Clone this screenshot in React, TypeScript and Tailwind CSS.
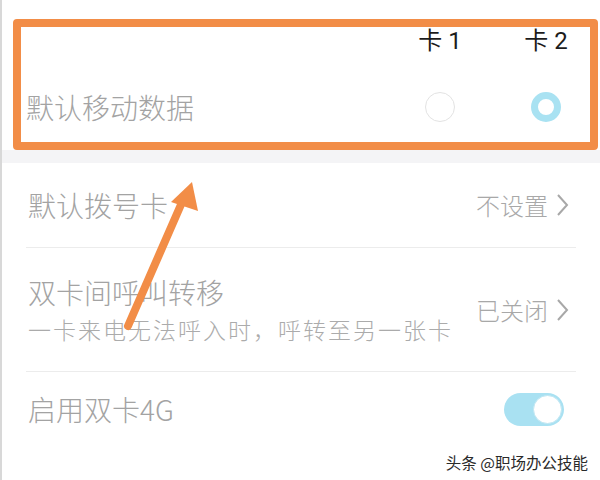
import React from "react";

const font = { fontFamily: '"Noto Sans CJK SC", "Noto Sans", sans-serif' };

function Chevron() {
  return (
    <svg width="14" height="26" viewBox="0 0 14 26" className="ml-[8px]">
      <polyline points="2,3 11,13 2,23" fill="none" stroke="#a8a8a8" strokeWidth="2" />
    </svg>
  );
}

export default function App() {
  return (
    <div
      className="relative w-[600px] h-[480px] overflow-hidden bg-white border-l-[2px] border-[#d8d8d8]"
      style={font}
    >
      {/* top section */}
      <div className="h-[150px] pt-[19px] pl-[11px] pr-[2px] bg-white">
        <div className="h-[131px] border-[8px] border-[#f28d47] rounded-[4px] flex flex-col pl-[5px] pr-[14px]">
          <div className="h-[28px] flex items-center justify-end gap-[46px] text-[24px] text-[#1c1c1c] leading-none">
            <div className="w-[60px] text-center" style={{ fontFamily: 'Roboto, "Noto Sans CJK SC", sans-serif' }}>卡 1</div>
            <div className="w-[60px] text-center" style={{ fontFamily: 'Roboto, "Noto Sans CJK SC", sans-serif' }}>卡 2</div>
          </div>
          <div className="flex-1 pt-[16px] flex items-center">
            <div className="flex-1 text-[28px] font-light text-[#a3a3a3] leading-none">默认移动数据</div>
            <div className="flex gap-[46px]">
              <div className="w-[60px] flex justify-center">
                <div className="w-[30px] h-[30px] rounded-full border-[1.5px] border-[#e3e3e3]" />
              </div>
              <div className="w-[60px] flex justify-center">
                <div className="w-[30px] h-[30px] rounded-full border-[7px] border-[#a9e2f2] bg-white" />
              </div>
            </div>
          </div>
        </div>
      </div>
      <div className="h-[13px] bg-[#f4f4f6]" />

      {/* list */}
      <div className="px-[24px]">
        <div className="h-[85px] flex items-center border-b border-[#ececec] pl-[2px] pr-[6px]">
          <div className="flex-1 text-[28px] font-light text-[#a3a3a3] leading-none">默认拨号卡</div>
          <div className="flex items-center text-[24px] font-light text-[#a8a8a8] leading-none">
            不设置
            <Chevron />
          </div>
        </div>
        <div className="h-[124px] flex items-center border-b border-[#ececec] pl-[2px] pr-[6px]">
          <div className="flex-1 flex flex-col gap-[12px]">
            <div className="text-[28px] font-light text-[#a3a3a3] leading-none">双卡间呼叫转移</div>
            <div className="text-[23px] font-light text-[#ababab] leading-none tracking-[2px]">
              一卡来电无法呼入时，呼转至另一张卡
            </div>
          </div>
          <div className="flex items-center text-[24px] font-light text-[#a8a8a8] leading-none">
            已关闭
            <Chevron />
          </div>
        </div>
        <div className="h-[74px] flex items-center pl-[2px] pr-[12px]">
          <div className="flex-1 text-[28px] font-light text-[#a3a3a3] leading-none">启用双卡4G</div>
          <div className="w-[60px] h-[33px] rounded-full bg-[#a9e1f2] flex items-center justify-end pr-[2px]">
            <div className="w-[29px] h-[29px] rounded-full bg-white border border-[#bfe6f2]" />
          </div>
        </div>
      </div>

      {/* annotation arrow */}
      <svg className="absolute left-0 top-0 pointer-events-none" width="600" height="480">
        <line x1="126" y1="326" x2="181" y2="200" stroke="#f28d47" strokeWidth="8" strokeLinecap="round" />
        <polygon points="190,182 169,202 196,211" fill="#f28d47" />
      </svg>

      {/* watermark */}
      <div
        className="absolute right-[12px] bottom-[10px] text-[15.5px] text-[#2a2a2a] leading-none"
        style={{ textShadow: "0 0 2px #fff, 0 0 2px #fff" }}
      >
        头条 @职场办公技能
      </div>
    </div>
  );
}
